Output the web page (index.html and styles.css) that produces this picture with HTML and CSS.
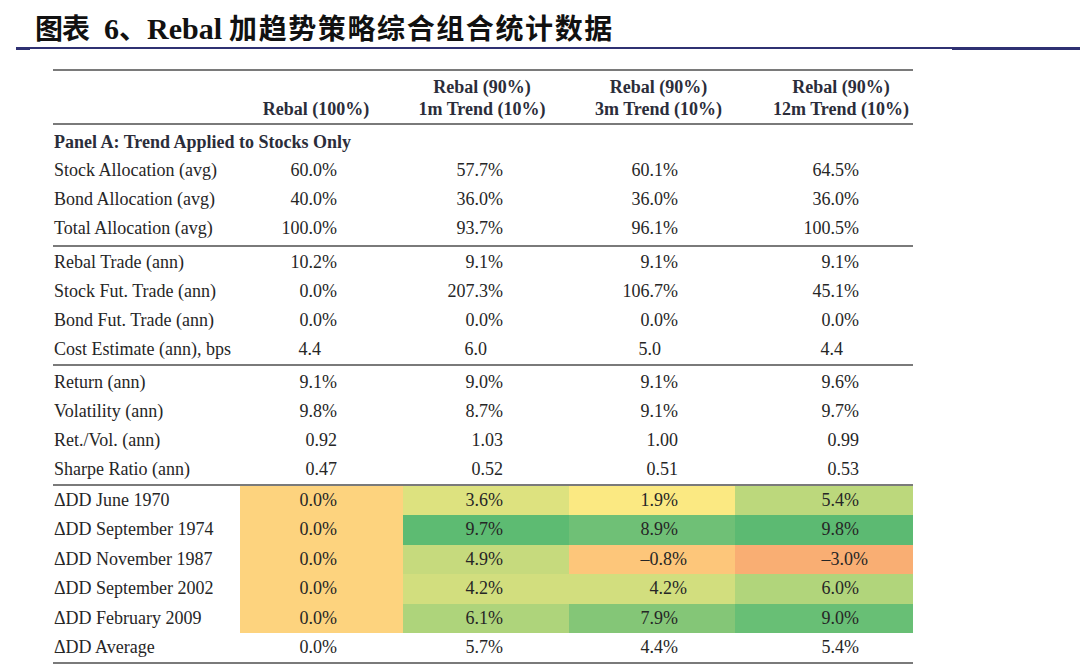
FILE: index.html
```html
<!DOCTYPE html>
<html lang="zh-CN">
<head>
<meta charset="utf-8">
<title>图表 6、Rebal 加趋势策略综合组合统计数据</title>
<link rel="stylesheet" href="styles.css">
</head>
<body>
<h1 class="title"><span class="cjk lead">图表</span><span class="lat num">6</span><span class="cjk">、</span><span class="lat">Rebal</span> <span class="cjk rest">加趋势策略综合组合统计数据</span></h1>

<table class="stats">
  <colgroup>
    <col class="w0"><col class="w1"><col class="w2"><col class="w3"><col class="w4">
  </colgroup>
  <thead>
    <tr>
      <th class="lab"></th>
      <th class="h1"><br>Rebal (100%)</th>
      <th class="h2">Rebal (90%)<br>1m Trend (10%)</th>
      <th class="h3">Rebal (90%)<br>3m Trend (10%)</th>
      <th class="h4">Rebal (90%)<br>12m Trend (10%)</th>
    </tr>
  </thead>
  <tbody>
    <tr class="panel"><td colspan="5">Panel A: Trend Applied to Stocks Only</td></tr>
    <tr><td class="lab">Stock Allocation (avg)</td><td class="c1">60.0%</td><td class="c2">57.7%</td><td class="c3">60.1%</td><td class="c4">64.5%</td></tr>
    <tr><td class="lab">Bond Allocation (avg)</td><td class="c1">40.0%</td><td class="c2">36.0%</td><td class="c3">36.0%</td><td class="c4">36.0%</td></tr>
    <tr class="pre"><td class="lab">Total Allocation (avg)</td><td class="c1">100.0%</td><td class="c2">93.7%</td><td class="c3">96.1%</td><td class="c4">100.5%</td></tr>

    <tr class="rule first-a"><td class="lab">Rebal Trade (ann)</td><td class="c1">10.2%</td><td class="c2">9.1%</td><td class="c3">9.1%</td><td class="c4">9.1%</td></tr>
    <tr><td class="lab">Stock Fut. Trade (ann)</td><td class="c1">0.0%</td><td class="c2">207.3%</td><td class="c3">106.7%</td><td class="c4">45.1%</td></tr>
    <tr><td class="lab">Bond Fut. Trade (ann)</td><td class="c1">0.0%</td><td class="c2">0.0%</td><td class="c3">0.0%</td><td class="c4">0.0%</td></tr>
    <tr class="cost"><td class="lab">Cost Estimate (ann), bps</td><td class="c1">4.4</td><td class="c2">6.0</td><td class="c3">5.0</td><td class="c4">4.4</td></tr>

    <tr class="rule first-b"><td class="lab">Return (ann)</td><td class="c1">9.1%</td><td class="c2">9.0%</td><td class="c3">9.1%</td><td class="c4">9.6%</td></tr>
    <tr><td class="lab">Volatility (ann)</td><td class="c1">9.8%</td><td class="c2">8.7%</td><td class="c3">9.1%</td><td class="c4">9.7%</td></tr>
    <tr><td class="lab">Ret./Vol. (ann)</td><td class="c1">0.92</td><td class="c2">1.03</td><td class="c3">1.00</td><td class="c4">0.99</td></tr>
    <tr><td class="lab">Sharpe Ratio (ann)</td><td class="c1">0.47</td><td class="c2">0.52</td><td class="c3">0.51</td><td class="c4">0.53</td></tr>

    <tr class="rule heat"><td class="lab">ΔDD June 1970</td><td class="c1 base">0.0%</td><td class="c2 h-dde27f">3.6%</td><td class="c3 h-fbe982">1.9%</td><td class="c4 h-bcd87c">5.4%</td></tr>
    <tr class="heat"><td class="lab">ΔDD September 1974</td><td class="c1 base">0.0%</td><td class="c2 h-5dbb72">9.7%</td><td class="c3 h-6fc076">8.9%</td><td class="c4 h-5cba72">9.8%</td></tr>
    <tr class="heat"><td class="lab">ΔDD November 1987</td><td class="c1 base">0.0%</td><td class="c2 h-c6da7d">4.9%</td><td class="c3 h-fdc67a neg">&ndash;0.8%</td><td class="c4 h-f9ae73 neg">&ndash;3.0%</td></tr>
    <tr class="heat"><td class="lab">ΔDD September 2002</td><td class="c1 base">0.0%</td><td class="c2 h-d2de7e">4.2%</td><td class="c3 h-d2de7e neg">4.2%</td><td class="c4 h-b1d57b">6.0%</td></tr>
    <tr class="heat"><td class="lab">ΔDD February 2009</td><td class="c1 base">0.0%</td><td class="c2 h-aed47b">6.1%</td><td class="c3 h-84c677">7.9%</td><td class="c4 h-68bf75">9.0%</td></tr>
    <tr class="last"><td class="lab">ΔDD Average</td><td class="c1">0.0%</td><td class="c2">5.7%</td><td class="c3">4.4%</td><td class="c4">5.4%</td></tr>
  </tbody>
</table>
</body>
</html>
```

FILE: styles.css
```css
html, body {
  margin: 0;
  padding: 0;
  background: #ffffff;
}

body {
  font-family: "Liberation Serif", "Noto Sans CJK SC", serif;
  color: #262626;
}

.title {
  position: relative;
  margin: 0 0 0 16px;
  padding: 10px 0 3px 19px;
  height: 34px;
  line-height: 34px;
  font-size: 28px;
  font-weight: 700;
  color: #111111;
  border-bottom: 2px solid #2f3172;
  white-space: nowrap;
}

.title::before {
  content: "";
  position: absolute;
  left: 0;
  bottom: -3px;
  width: 14px;
  height: 2px;
  background: #2f3172;
}

.title::after {
  content: "";
  position: absolute;
  right: 0;
  bottom: -3px;
  width: 128px;
  height: 2px;
  background: #2f3172;
}

.title .cjk {
  font-family: "Noto Sans CJK SC", sans-serif;
  font-weight: 700;
}

.title .lead {
  letter-spacing: -1px;
}

.title .rest {
  letter-spacing: 1.6px;
}

.title .lat {
  font-family: "Liberation Serif", serif;
  font-weight: 700;
  font-size: 30px;
}

.title .num {
  margin-left: 15px;
}

.stats {
  margin: 20px 0 0 53px;
  width: 860px;
  table-layout: fixed;
  border-collapse: collapse;
  font-size: 18px;
}

.w0 { width: 187px; }
.w1 { width: 163px; }
.w2 { width: 166px; }
.w3 { width: 166px; }
.w4 { width: 178px; }

.stats th,
.stats td {
  padding: 0;
  white-space: nowrap;
}

.stats thead th {
  border-top: 2px solid #7a7a7a;
  border-bottom: 2px solid #7a7a7a;
  padding-top: 5px;
  padding-bottom: 3px;
  line-height: 22px;
  font-weight: 700;
  color: #2b2d3a;
  text-align: center;
  vertical-align: top;
}

.stats thead .h1 { padding-right: 11px; }
.stats thead .h2 { padding-right: 8px; }
.stats thead .h3 { padding-left: 13px; }
.stats thead .h4 { padding-left: 34px; }

.stats td {
  line-height: 29px;
  vertical-align: top;
  text-align: right;
}

.stats td.lab {
  text-align: left;
  padding-left: 1px;
}

.stats td.c1 { padding-right: 66px; }
.stats td.c2 { padding-right: 66px; }
.stats td.c3 { padding-right: 57px; }
.stats td.c4 { padding-right: 54px; }

.stats .cost td.c1 { padding-right: 82px; }
.stats .cost td.c2 { padding-right: 82px; }
.stats .cost td.c3 { padding-right: 74px; }
.stats .cost td.c4 { padding-right: 70px; }

.stats td.c3.neg { padding-right: 48px; }
.stats td.c4.neg { padding-right: 45px; }

.stats .panel td {
  text-align: left;
  padding: 3px 0 0 1px;
  line-height: 28px;
  font-weight: 700;
  color: #2b2d3a;
}

.stats .pre td {
  padding-bottom: 2px;
}

.stats .rule td {
  border-top: 2px solid #7a7a7a;
}

.stats .first-a td { padding-top: 1px; }
.stats .first-b td { padding-top: 2px; }

.stats .heat td {
  line-height: 29.4px;
}

.stats .last td {
  border-bottom: 2px solid #7a7a7a;
}

.base { background: #fdd37e; }
.h-dde27f { background: #dde27f; }
.h-fbe982 { background: #fbe982; }
.h-bcd87c { background: #bcd87c; }
.h-5dbb72 { background: #5dbb72; }
.h-6fc076 { background: #6fc076; }
.h-5cba72 { background: #5cba72; }
.h-c6da7d { background: #c6da7d; }
.h-fdc67a { background: #fdc67a; }
.h-f9ae73 { background: #f9ae73; }
.h-d2de7e { background: #d2de7e; }
.h-b1d57b { background: #b1d57b; }
.h-aed47b { background: #aed47b; }
.h-84c677 { background: #84c677; }
.h-68bf75 { background: #68bf75; }
```
